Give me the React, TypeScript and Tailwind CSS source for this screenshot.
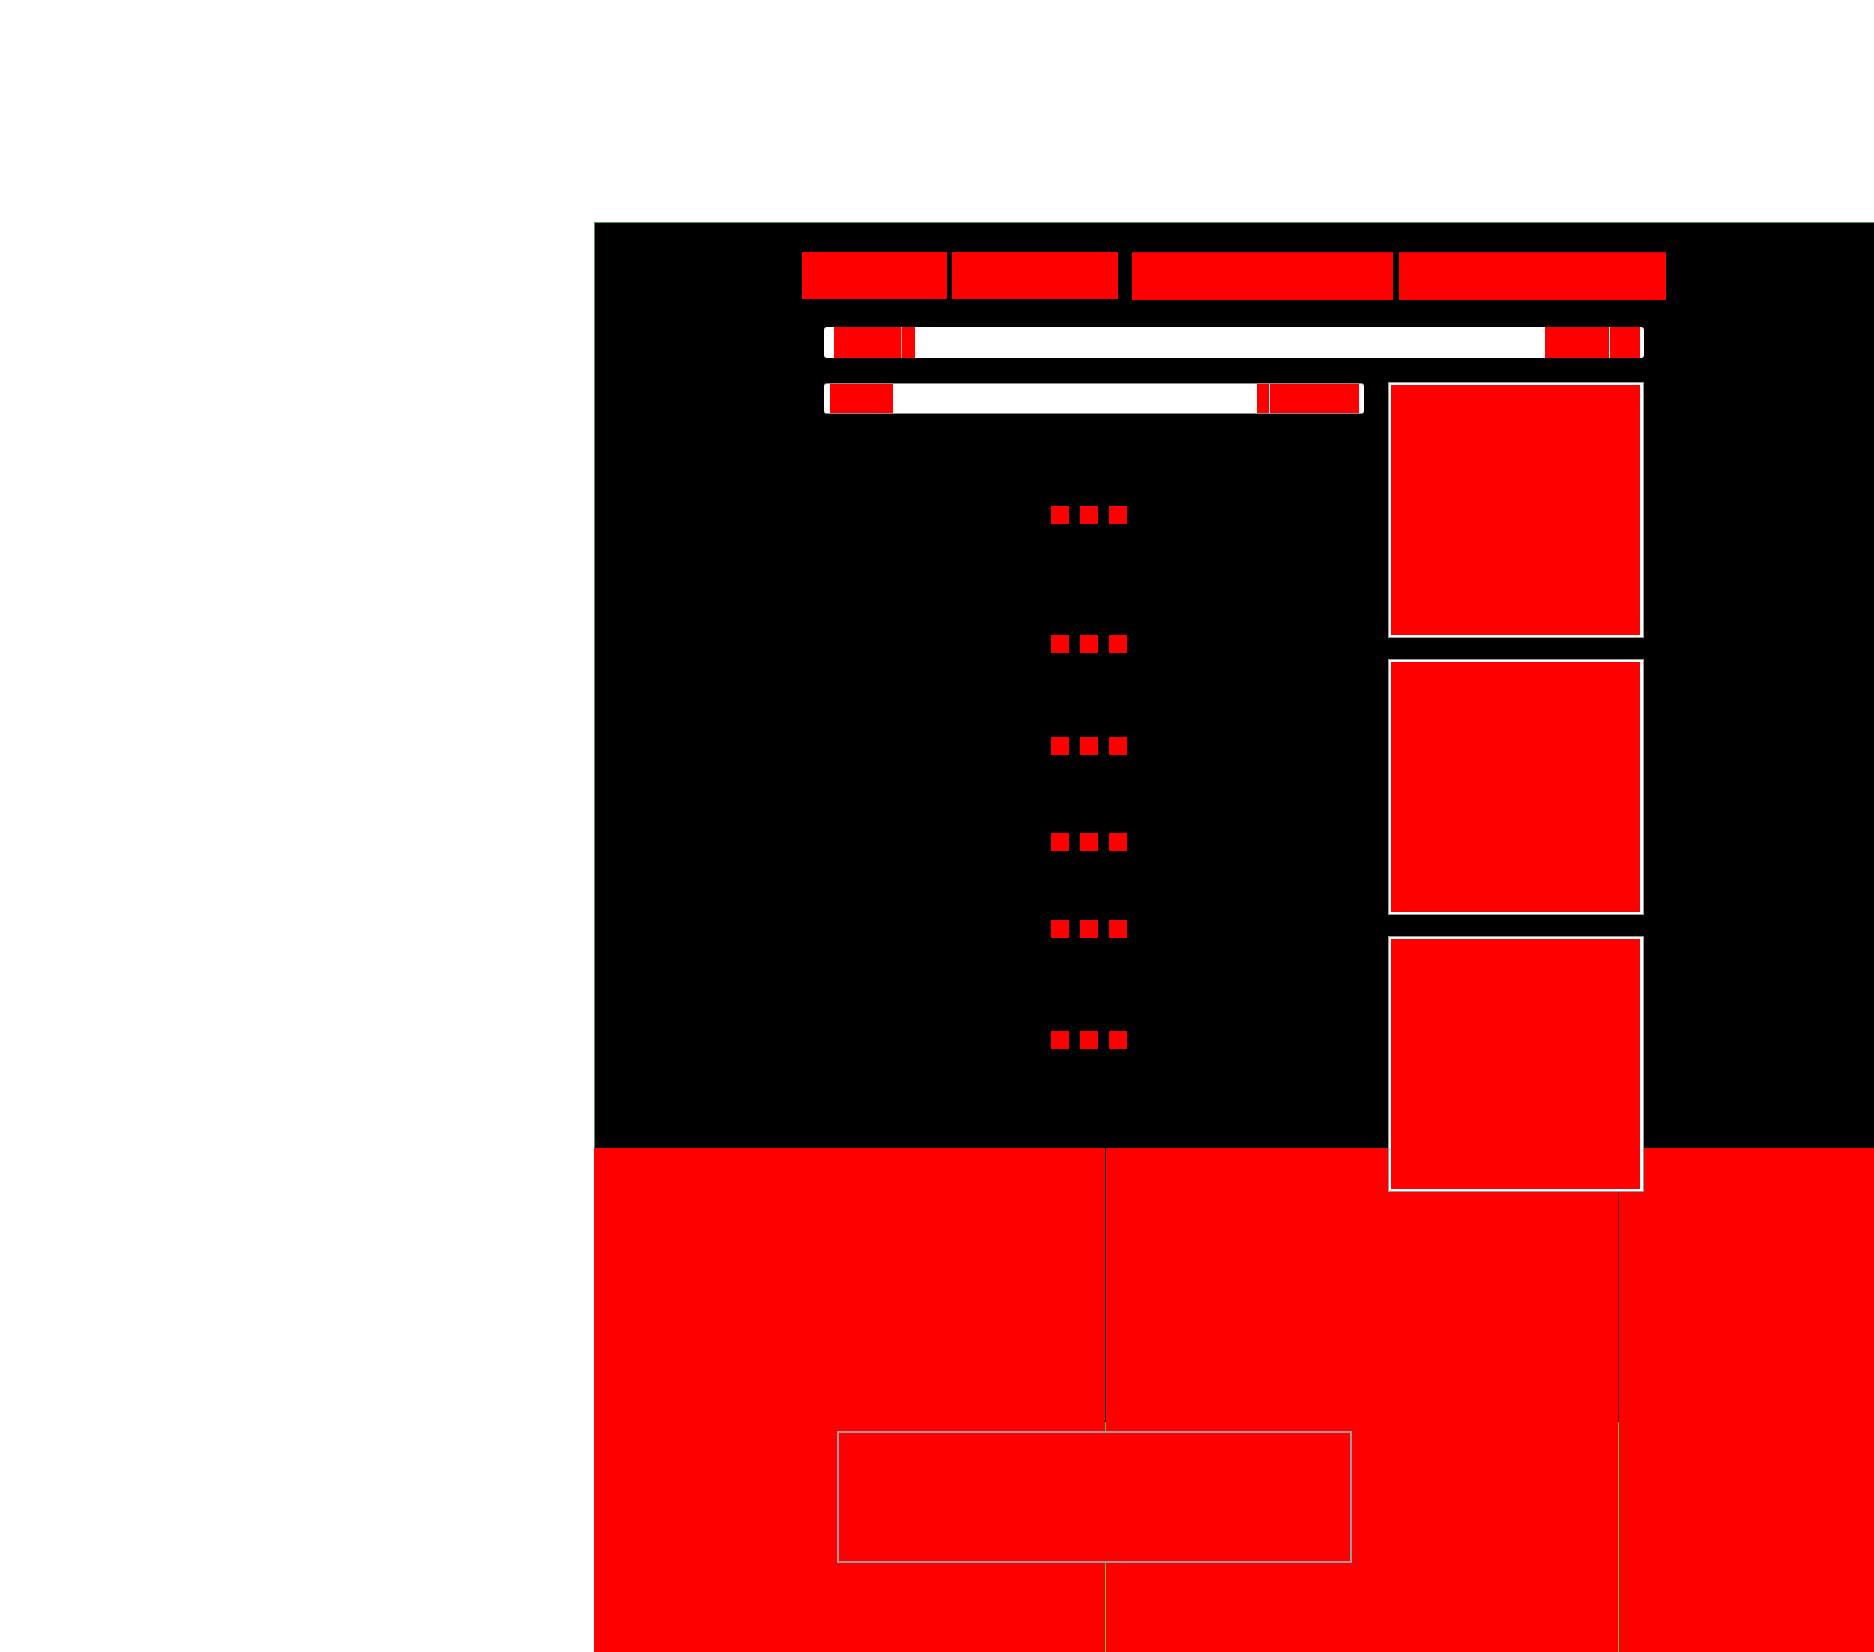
const TOP_BLOCKS = [
    { w: "w-[145px]", h: "h-[47px]", ml: "" },
    { w: "w-[166px]", h: "h-[47px]", ml: "ml-[5px]" },
    { w: "w-[261px]", h: "h-[48px]", ml: "ml-[14px]" },
    { w: "w-[267px]", h: "h-[48px]", ml: "ml-[6px]" },
]

// vertical gap above each row of dots
const DOT_ROWS = ["mt-[92px]", "mt-[111px]", "mt-[84px]", "mt-[78px]", "mt-[69px]", "mt-[93px]"]

function Dots({ className }: { className: string }) {
    return (
        <div className={`flex gap-[11px] ml-[227px] ${className}`}>
            <div className="w-[18px] h-[18px] bg-[#ff0000]" />
            <div className="w-[18px] h-[18px] bg-[#ff0000]" />
            <div className="w-[18px] h-[18px] bg-[#ff0000]" />
        </div>
    )
}

function Card() {
    return (
        <div className="w-[256px] h-[256px] border border-[#9a9a9a] bg-white pl-[2px] pt-[2px] pr-[3px] pb-[2px]">
            <div className="w-full h-full bg-[#ff0000]" />
        </div>
    )
}

function ColumnLine({ top }: { top: string }) {
    return (
        <div className="w-px flex flex-col shrink-0">
            <div className={`h-[274px] ${top}`} />
            <div className="flex-1 bg-[#3fcf2f]" />
        </div>
    )
}

export default function App() {
    return (
        <div className="bg-white pl-[594px] pt-[222px] w-[1874px] min-h-[1652px]">
            {/* dark panel */}
            <div className="w-[1280px] h-[926px] bg-black border-t border-l border-[#4f9a4f]">
                <div className="w-[864px] ml-[207px] pt-[29px] flex items-start">
                    {TOP_BLOCKS.map((block, i) => (
                        <div
                            key={i}
                            className={`${block.w} ${block.h} ${block.ml} bg-[#ff0000] ${i > 1 ? "border-t border-[#c80000]" : ""}`}
                        />
                    ))}
                </div>

                <div className="w-[820px] ml-[229px] mt-[27px]">
                    <div className="h-[31px] bg-white rounded-[3px] flex items-stretch pl-[10px] pr-[4px]">
                        <div className="w-[68px] bg-[#ff0000] border-r border-[#ff9a9a]" />
                        <div className="w-[13px] bg-[#ff0000]" />
                        <div className="flex-1" />
                        <div className="w-[64px] bg-[#ff0000]" />
                        <div className="w-px bg-white" />
                        <div className="w-[30px] bg-[#ff0000]" />
                    </div>

                    <div className="flex items-start gap-[24px] mt-[24px]">
                        <div className="w-[540px] pt-px">
                            <div className="h-[31px] bg-white rounded-[3px] border-y border-[#8a8a8a] flex items-stretch pl-[6px] pr-[5px]">
                                <div className="w-[63px] bg-[#ff0000]" />
                                <div className="flex-1" />
                                <div className="w-[12px] bg-[#ff0000]" />
                                <div className="w-px bg-white" />
                                <div className="w-[89px] bg-[#ff0000]" />
                            </div>

                            {DOT_ROWS.map((mt) => (
                                <Dots key={mt} className={mt} />
                            ))}
                        </div>

                        <div className="relative z-10 flex flex-col gap-[21px]">
                            <Card />
                            <Card />
                            <Card />
                        </div>
                    </div>
                </div>
            </div>

            {/* footer panel */}
            <div className="relative w-[1280px] h-[504px] bg-[#ff0000] flex">
                <div className="w-[511px]" />
                <ColumnLine top="bg-black" />
                <div className="w-[512px]" />
                <ColumnLine top="bg-[#7a0000]" />
                <div className="flex-1" />

                <div className="absolute left-[243px] top-[283px] w-[515px] h-[132px] border-2 border-[#9a9a9a] bg-[#ff0000]" />
            </div>
        </div>
    )
}
